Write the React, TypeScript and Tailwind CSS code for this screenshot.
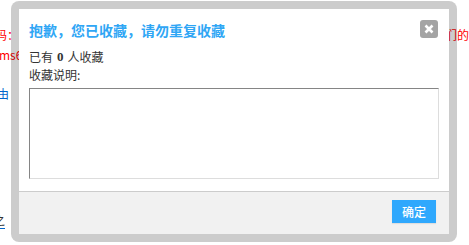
import React from "react";

export default function App() {
  return (
    <div className="relative h-[245px] w-[469px] overflow-hidden bg-white font-['Noto_Sans_CJK_SC',sans-serif]">
      {/* background page content */}
      <div className="text-[12px] leading-[20px]">
        <div className="h-[25px]" />
        <div className="flex h-[20px] justify-between whitespace-nowrap text-[#ff0000]">
          <span className="-ml-[5px]">码：</span>
          <span>请联系我们的</span>
        </div>
        <div className="h-[20px] whitespace-nowrap text-[#ff0000]">
          <span className="-ml-[1px]">ms6</span>
        </div>
        <div className="h-[19px]" />
        <div className="h-[20px] whitespace-nowrap text-[#0066cc]">
          <span className="-ml-[3px]">由</span>
        </div>
        <div className="h-[106px]" />
        <div className="h-[20px] whitespace-nowrap text-[#333]">
          <span className="-ml-[7px] border-b border-[#0066cc]">之</span>
        </div>
      </div>

      {/* modal */}
      <div className="absolute left-[11px] top-[1px] h-[241px] w-[446px] rounded-[8px] bg-black/20 p-[8px]">
        <div className="flex h-full flex-col bg-white">
          <div className="flex items-start justify-between pl-[10px] pr-[11px] pt-[11px]">
            <h3 className="text-[14px] font-bold leading-[20px] text-[#2fa6f5]">
              抱歉，您已收藏，请勿重复收藏
            </h3>
            <button className="flex h-[18px] w-[18px] items-center justify-center rounded-[3px] bg-[#a4a4a4]">
              <svg width="10" height="10" viewBox="0 0 10 10">
                <path
                  d="M1.5 1.5 L8.5 8.5 M8.5 1.5 L1.5 8.5"
                  stroke="#ffffff"
                  strokeWidth="2.6"
                  strokeLinecap="butt"
                />
              </svg>
            </button>
          </div>
          <div className="px-[10px] pt-[8px] text-[12px] leading-[18px] text-[#333]">
            <div className="flex h-[18px] items-center">
              <span>已有</span>
              <b className="mx-[4px] font-['Liberation_Serif',serif] text-[13px] font-bold leading-[18px]">0</b>
              <span>人收藏</span>
            </div>
            <div className="h-[18px]">收藏说明:</div>
            <textarea className="mt-[4px] block h-[91px] w-full resize-none border border-b-[#dddddd] border-l-[#858585] border-r-[#dddddd] border-t-[#858585] outline-none" />
          </div>
          <div className="mt-[12px] flex flex-1 items-start justify-end border-t border-[#cccccc] bg-[#f1f1f1] pr-[13px] pt-[8px]">
            <button className="h-[23px] w-[44px] bg-[#2fa8fd] text-[12px] font-medium leading-[23px] text-white shadow-[0_1px_1px_rgba(0,0,0,0.08)]">
              确定
            </button>
          </div>
        </div>
      </div>
    </div>
  );
}
